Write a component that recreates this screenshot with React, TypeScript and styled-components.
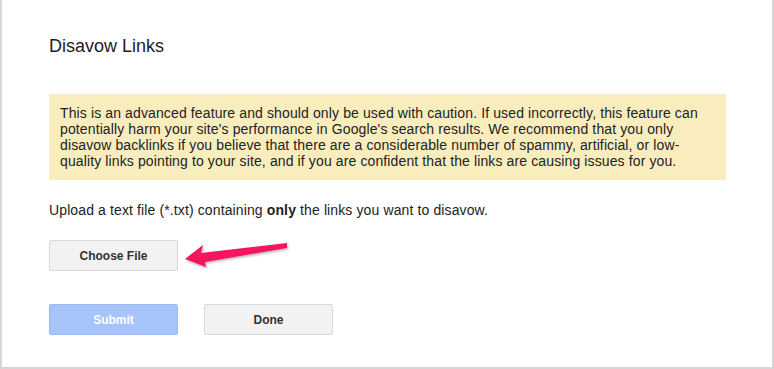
import React from "react";
import styled, { createGlobalStyle } from "styled-components";

const GlobalStyle = createGlobalStyle`
  html, body {
    margin: 0;
    padding: 0;
    background: #fff;
  }
  body {
    font-family: "Liberation Sans", Arial, sans-serif;
    color: #222;
  }
`;

// パネル本体（上は切れているので枠なし）
const Panel = styled.div`
  box-sizing: border-box;
  width: 774px;
  height: 369px;
  border: 2px solid #d6d6d6;
  border-top: none;
  padding: 36px 0 0 47px;
  background: #fff;
`;

const Title = styled.h1`
  margin: 0;
  font-size: 18px;
  font-weight: normal;
  line-height: 21px;
  color: #222;
`;

const Warning = styled.div`
  box-sizing: border-box;
  width: 677px;
  margin-top: 37px;
  padding: 11px;
  background: #f9edbe;
  font-size: 14px;
  letter-spacing: 0.12px;
  line-height: 16px;
  color: #222;
`;

const Note = styled.p`
  margin: 22px 0 0;
  font-size: 14px;
  letter-spacing: 0.12px;
  line-height: 16px;
  color: #222;

  b {
    font-weight: bold;
  }
`;

const FileRow = styled.div`
  position: relative;
  margin-top: 22px;
  display: flex;
`;

const ActionRow = styled.div`
  margin-top: 33px;
  display: flex;
  gap: 26px;
`;

const Button = styled.button<{ $primary?: boolean }>`
  box-sizing: border-box;
  width: 129px;
  height: 31px;
  padding: 0;
  border-radius: 2px;
  border: 1px solid ${(p) => (p.$primary ? "#9dbcf5" : "#d9d9d9")};
  background: ${(p) => (p.$primary ? "#a6c4f9" : "#f2f2f2")};
  color: ${(p) => (p.$primary ? "#fff" : "#333")};
  font-family: "Liberation Sans", Arial, sans-serif;
  font-size: 12px;
  font-weight: bold;
  cursor: ${(p) => (p.$primary ? "default" : "pointer")};
`;

// 注釈の矢印（ボタンの上に重ねる）
const Arrow = styled.svg`
  position: absolute;
  left: 131px;
  top: -2px;
  width: 112px;
  height: 34px;
  overflow: visible;
  pointer-events: none;
`;

export default function App() {
  return (
    <>
      <GlobalStyle />
      <Panel>
        <Title>Disavow Links</Title>
        <Warning>
          This is an advanced feature and should only be used with caution. If used incorrectly, this feature can
          potentially harm your site's performance in Google's search results. We recommend that you only
          disavow backlinks if you believe that there are a considerable number of spammy, artificial, or low-
          quality links pointing to your site, and if you are confident that the links are causing issues for you.
        </Warning>
        <Note>
          Upload a text file (*.txt) containing <b>only</b> the links you want to disavow.
        </Note>
        <FileRow>
          <Button type="button">Choose File</Button>
          <Arrow viewBox="0 0 112 34">
            <defs>
              <filter id="arrowShadow" x="-20%" y="-50%" width="140%" height="200%">
                <feDropShadow dx="1" dy="1.5" stdDeviation="1" floodColor="#000" floodOpacity="0.3" />
              </filter>
            </defs>
            <polygon
              points="5,21 23,7 21,15 107,5 107,10 25,24 26,29"
              fill="#f2135b"
              filter="url(#arrowShadow)"
            />
          </Arrow>
        </FileRow>
        <ActionRow>
          <Button type="button" $primary disabled>
            Submit
          </Button>
          <Button type="button">Done</Button>
        </ActionRow>
      </Panel>
    </>
  );
}
